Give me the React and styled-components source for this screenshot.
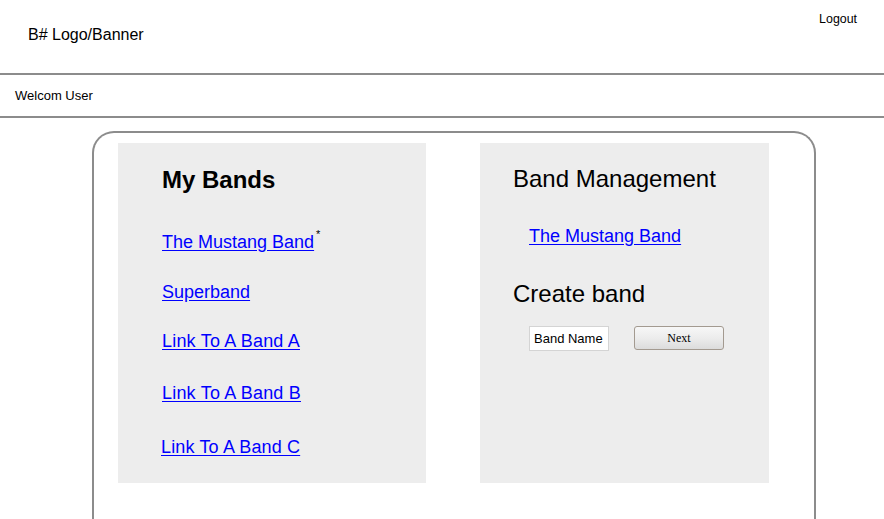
import React from "react";
import styled, { createGlobalStyle } from "styled-components";

const Global = createGlobalStyle`
  html, body { margin: 0; padding: 0; background: #ffffff; }
  body { font-family: "Liberation Sans", Arial, sans-serif; color: #000; overflow: hidden; }
  * { box-sizing: border-box; }
`;

const Page = styled.div`
  width: 884px;
  height: 519px;
  overflow: hidden;
`;

const Header = styled.header`
  height: 75px;
  border-bottom: 2px solid #8c8c8c;
  display: flex;
  justify-content: space-between;
  align-items: flex-start;
  padding: 0 27px 0 28px;
`;

const Logo = styled.div`
  font-size: 16px;
  line-height: 16px;
  margin-top: 27px;
`;

const Logout = styled.a`
  font-size: 12.4px;
  line-height: 12px;
  margin-top: 13px;
  color: #000;
  text-decoration: none;
  cursor: pointer;
`;

const WelcomeBar = styled.div`
  height: 43px;
  border-bottom: 2px solid #8c8c8c;
  padding: 0 0 0 15px;
  font-size: 13px;
  line-height: 13px;
  display: flex;
  align-items: flex-start;
`;

const WelcomeText = styled.span`
  margin-top: 14px;
`;

const Frame = styled.main`
  margin: 13px 0 0 92px;
  width: 724px;
  height: 420px;
  border: 2px solid #8c8c8c;
  border-bottom: none;
  border-radius: 22px 22px 0 0;
  padding: 10px 0 0 24px;
  display: flex;
  align-items: flex-start;
  gap: 54px;
`;

const Panel = styled.section`
  width: ${(p) => p.$w}px;
  height: 340px;
  background: #ededed;
  padding-left: ${(p) => p.$pad}px;
  display: flex;
  flex-direction: column;
  align-items: flex-start;
`;

const Title = styled.h2`
  margin: ${(p) => p.$top}px 0 0 0;
  font-size: 24px;
  line-height: 24px;
  font-weight: ${(p) => (p.$bold ? 700 : 400)};
  white-space: nowrap;
`;

const LinkRow = styled.div`
  margin: ${(p) => p.$top}px 0 0 ${(p) => p.$indent || 0}px;
  font-size: 18px;
  line-height: 18px;
  white-space: nowrap;
  position: relative;
`;

const BandLink = styled.a`
  color: #0000ff;
  text-decoration: underline;
  text-underline-offset: 2px;
  letter-spacing: ${(p) => p.$ls || 0}px;
  cursor: pointer;
`;

const Star = styled.sup`
  position: absolute;
  left: calc(100% + 2px);
  top: -4px;
  font-size: 11px;
  line-height: 11px;
  color: #000;
`;

const FormRow = styled.div`
  margin: 20px 0 0 16px;
  display: flex;
  align-items: flex-start;
  gap: 25px;
`;

const NameInput = styled.input`
  width: 80px;
  height: 25px;
  border: 1px solid #d4d4d4;
  background: #ffffff;
  padding: 0 0 0 4px;
  font-family: "Liberation Sans", Arial, sans-serif;
  font-size: 13px;
  color: #000;
  outline: none;
`;

const NextButton = styled.button`
  width: 90px;
  height: 24px;
  border: 1px solid #a39a90;
  border-radius: 3px;
  background: linear-gradient(#f7f7f7, #ececec 50%, #dcdcdc);
  font-family: "Liberation Serif", "Times New Roman", serif;
  font-size: 12px;
  color: #000;
  padding: 0;
  cursor: pointer;
`;

const myBands = [
  { name: "The Mustang Band", top: 40, star: true },
  { name: "Superband", top: 32 },
  { name: "Link To A Band A", top: 31, ls: 0.2 },
  { name: "Link To A Band B", top: 34, ls: 0.2 },
  { name: "Link To A Band C", top: 36, indent: -1, ls: 0.15 },
];

export default function App() {
  return (
    <Page>
      <Global />
      <Header>
        <Logo>B# Logo/Banner</Logo>
        <Logout>Logout</Logout>
      </Header>
      <WelcomeBar>
        <WelcomeText>Welcom User</WelcomeText>
      </WelcomeBar>
      <Frame>
        <Panel $w={308} $pad={44}>
          <Title $bold $top={25}>My Bands</Title>
          {myBands.map((b) => (
            <LinkRow key={b.name} $top={b.top + (b.star ? 1 : 0)} $indent={b.indent}>
              <BandLink $ls={b.ls}>{b.name}</BandLink>
              {b.star && <Star>*</Star>}
            </LinkRow>
          ))}
        </Panel>
        <Panel $w={289} $pad={33}>
          <Title $top={24}>Band Management</Title>
          <LinkRow $top={36} $indent={16}>
            <BandLink>The Mustang Band</BandLink>
          </LinkRow>
          <Title $top={37}>Create band</Title>
          <FormRow>
            <NameInput defaultValue="Band Name" />
            <NextButton>Next</NextButton>
          </FormRow>
        </Panel>
      </Frame>
    </Page>
  );
}
